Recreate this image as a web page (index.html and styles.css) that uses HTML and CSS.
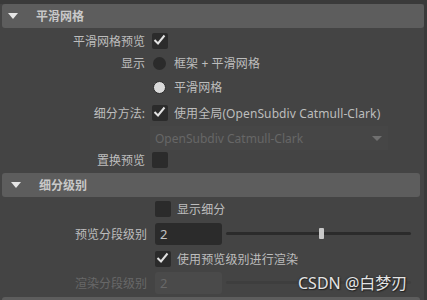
FILE: index.html
```html
<!DOCTYPE html>
<html lang="zh-CN">
<head>
    <meta charset="UTF-8">
    <title>平滑网格</title>
    <link rel="stylesheet" href="styles.css">
</head>
<body>
    <div class="window">
        <div class="panel">
            <div class="top-strip"></div>

            <!-- 平滑网格 -->
            <div class="section-header">
                <span class="arrow"></span>
                <span class="section-title">平滑网格</span>
            </div>
            <div class="section">
                <div class="row r1">
                    <span class="label">平滑网格预览</span>
                    <span class="check on"><svg viewBox="0 0 16 16"><polyline points="2.5,7 6,10.5 12.5,2.5"/></svg></span>
                </div>
                <div class="row r2">
                    <span class="label">显示</span>
                    <span class="radio"></span>
                    <span class="opt">框架 + 平滑网格</span>
                </div>
                <div class="row r3">
                    <span class="label"></span>
                    <span class="radio on"></span>
                    <span class="opt">平滑网格</span>
                </div>
                <div class="row r4">
                    <span class="label">细分方法:</span>
                    <span class="check on"><svg viewBox="0 0 16 16"><polyline points="2.5,7 6,10.5 12.5,2.5"/></svg></span>
                    <span class="opt">使用全局(OpenSubdiv Catmull-Clark)</span>
                </div>
                <div class="row r5">
                    <span class="label"></span>
                    <div class="dropdown">
                        <span>OpenSubdiv Catmull-Clark</span>
                        <span class="drop-arrow"></span>
                    </div>
                </div>
                <div class="row r6">
                    <span class="label">置换预览</span>
                    <span class="check"></span>
                </div>
            </div>

            <!-- 细分级别 -->
            <div class="section-header sub">
                <span class="arrow"></span>
                <span class="section-title">细分级别</span>
            </div>
            <div class="section sub">
                <div class="row s1">
                    <span class="label"></span>
                    <span class="check"></span>
                    <span class="opt">显示细分</span>
                </div>
                <div class="row s2">
                    <span class="label">预览分段级别</span>
                    <span class="field">2</span>
                    <div class="slider">
                        <div class="track"></div>
                        <div class="thumb" style="left: 93px"></div>
                    </div>
                </div>
                <div class="row s3">
                    <span class="label"></span>
                    <span class="check on"><svg viewBox="0 0 16 16"><polyline points="2.5,7 6,10.5 12.5,2.5"/></svg></span>
                    <span class="opt">使用预览级别进行渲染</span>
                </div>
                <div class="row s4 disabled">
                    <span class="label">渲染分段级别</span>
                    <span class="field">2</span>
                    <div class="slider">
                        <div class="track"></div>
                        <div class="thumb" style="left: 93px"></div>
                    </div>
                </div>
            </div>
            <div class="section-header sub next"></div>
        </div>
        <div class="scroll"></div>
    </div>

    <div class="watermark">CSDN @白梦刃</div>
</body>
</html>
```

FILE: styles.css
```css
body {
    margin: 0;
    background-color: #444444;
    font-family: "Noto Sans", "Noto Sans CJK SC", sans-serif;
    font-size: 12px;
    color: #bdbdbd;
    overflow: hidden;
}

.window {
    display: flex;
    height: 300px;
}

.panel {
    flex: 1;
    padding-left: 2px;
}

.scroll {
    width: 3px;
    background-color: #3a3a3a;
}

.top-strip {
    height: 4px;
    margin-left: -2px;
    background-color: #3a3a3a;
}

.section-header {
    display: flex;
    align-items: center;
    height: 24px;
    background-color: #5d5d5d;
    border-radius: 3px;
}

.section-header.sub {
    margin-top: 3px;
    margin-right: 4px;
}

.section-header.next {
    height: 10px;
    margin-top: 1px;
}

.arrow {
    width: 0;
    height: 0;
    margin-left: 6px;
    border-left: 5px solid transparent;
    border-right: 5px solid transparent;
    border-top: 6px solid #e6e6e6;
}

.section-header.sub .arrow {
    margin-left: 9px;
}

.section-title {
    margin-left: 18px;
    font-weight: bold;
    color: #c9c9c9;
}

.row {
    display: flex;
    align-items: center;
}

.r1 { height: 23px; margin-top: 1px; }
.r2 { height: 22px; }
.r3 { height: 26px; }
.r4 { height: 26px; }
.r5 { height: 24px; }
.r6 { height: 20px; }

.s1 { height: 22px; margin-top: 1px; }
.s2 { height: 27px; }
.s3 { height: 23px; }
.s4 { height: 26px; }

.label {
    width: 143px;
    margin-right: 7px;
    text-align: right;
    white-space: nowrap;
}

.section.sub .label {
    width: 145px;
    margin-right: 8px;
}

.check {
    width: 16px;
    height: 16px;
    border-radius: 2px;
    background-color: #2b2b2b;
    flex-shrink: 0;
}

.check svg {
    display: block;
    width: 16px;
    height: 16px;
    fill: none;
    stroke: #e2e2e2;
    stroke-width: 2;
}

.radio {
    width: 13px;
    height: 13px;
    margin-left: 1px;
    margin-right: 1px;
    border-radius: 50%;
    background-color: #2b2b2b;
    box-sizing: border-box;
}

.radio.on {
    background-color: #dadada;
    border: 1px solid #2b2b2b;
}

.opt {
    margin-left: 7px;
    white-space: nowrap;
    letter-spacing: 0.1px;
}

.check + .opt {
    margin-left: 6px;
}

.dropdown {
    display: flex;
    align-items: center;
    justify-content: space-between;
    width: 238px;
    height: 24px;
    margin-left: -2px;
    padding: 0 6px 0 5px;
    box-sizing: border-box;
    background-color: #464646;
    color: #676767;
    white-space: nowrap;
}

.drop-arrow {
    width: 0;
    height: 0;
    border-left: 5px solid transparent;
    border-right: 5px solid transparent;
    border-top: 5px solid #707070;
}

.field {
    width: 67px;
    height: 22px;
    line-height: 22px;
    padding-left: 5px;
    box-sizing: border-box;
    border-radius: 3px;
    background-color: #2b2b2b;
    color: #c3c3c3;
    font-size: 13px;
}

.slider {
    position: relative;
    width: 185px;
    height: 12px;
    margin-left: 4px;
}

.track {
    position: absolute;
    left: 0;
    right: 0;
    top: 4px;
    height: 3px;
    border-radius: 2px;
    background-color: #2b2b2b;
}

.thumb {
    position: absolute;
    top: 0;
    width: 5px;
    height: 11px;
    border-radius: 1px;
    background-color: #c8c8c8;
}

.disabled .label {
    color: #686868;
}

.disabled .field {
    background-color: #4a4a4a;
    color: #686868;
}

.disabled .track {
    background-color: #3e3e3e;
}

.disabled .thumb {
    background-color: #5a5a5a;
}

.watermark {
    position: absolute;
    left: 298px;
    top: 270px;
    font-family: "Noto Sans", "Noto Sans CJK SC", sans-serif;
    font-size: 16px;
    color: #e4e4e4;
    text-shadow: 0 0 2px #222222, 1px 1px 1px #222222;
    white-space: nowrap;
}
```
